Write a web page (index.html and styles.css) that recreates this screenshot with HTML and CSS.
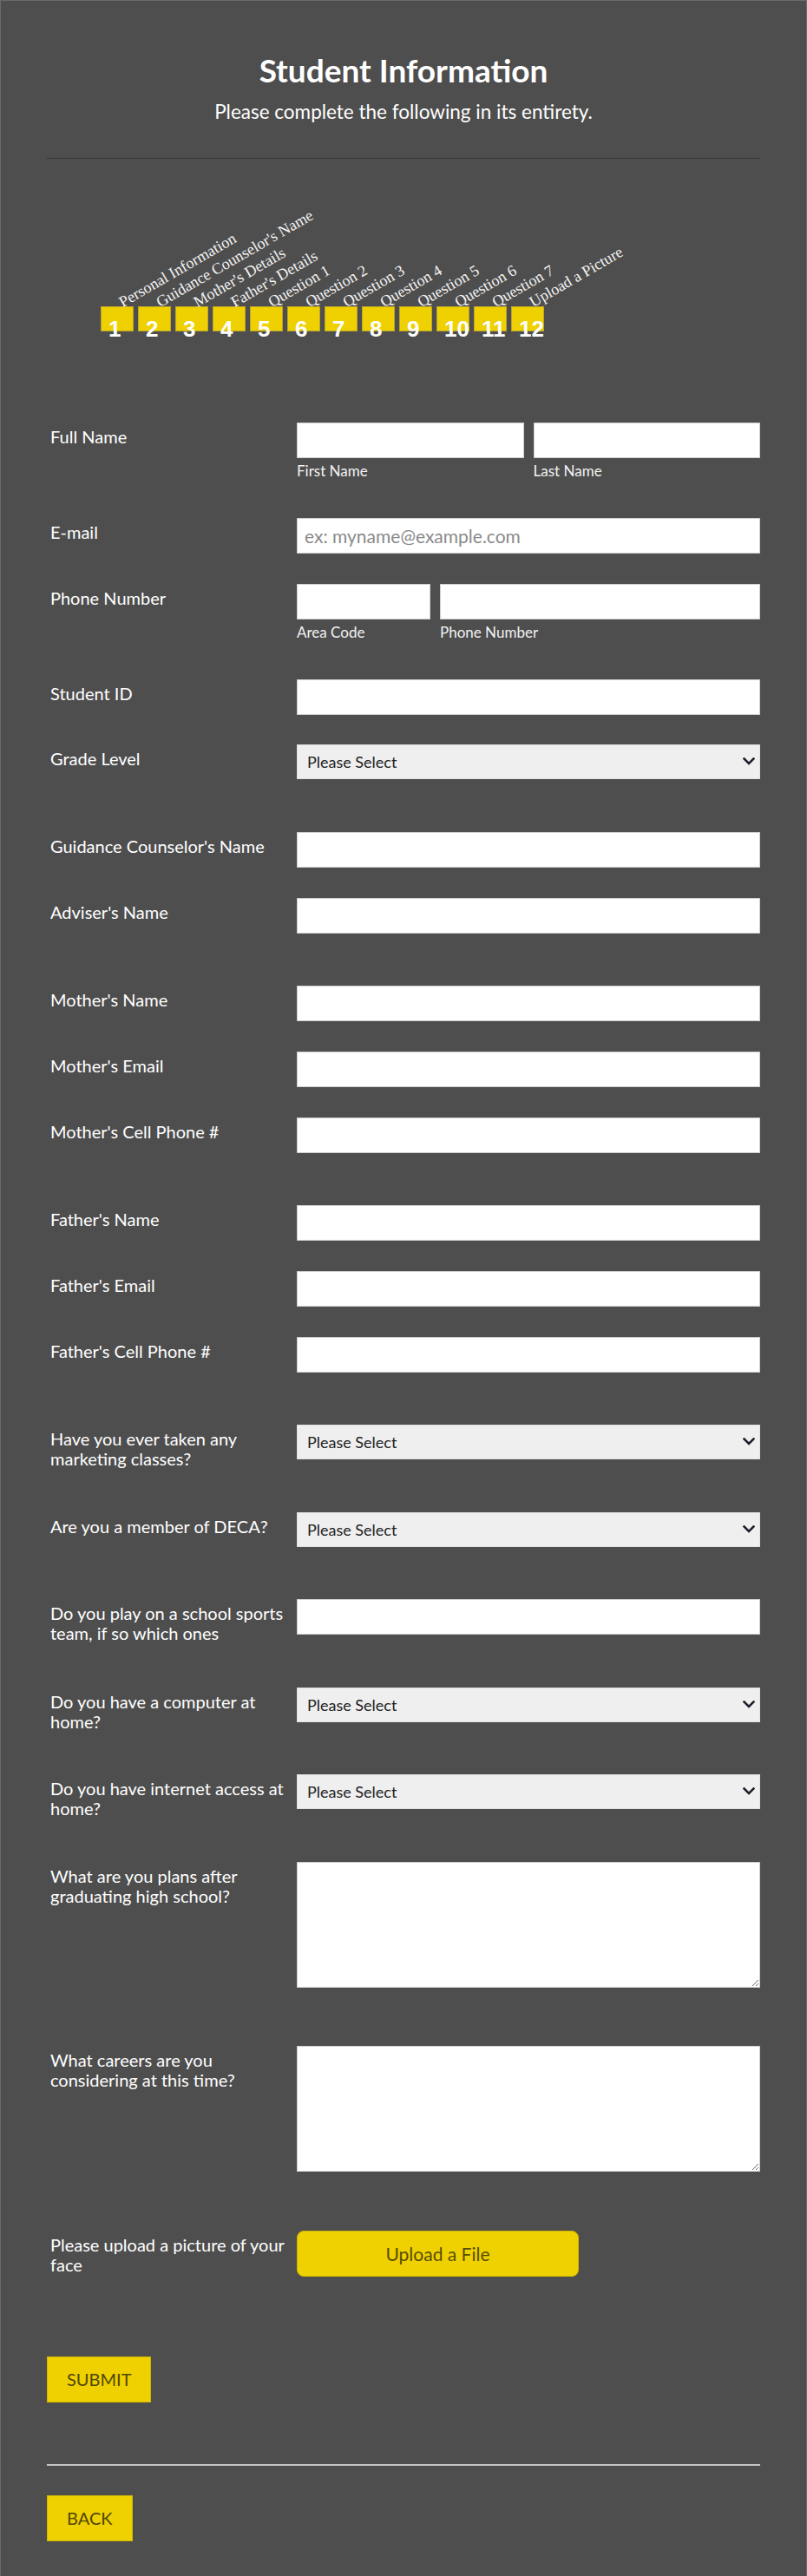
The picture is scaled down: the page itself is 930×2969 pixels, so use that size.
FILE: index.html
```html
<!DOCTYPE html>
<html>
<head>
<link rel="stylesheet" href="styles.css">
</head>
<body>
<div class="page">

  <div class="header">
    <h1 class="title">Student Information</h1>
    <p class="subtitle">Please complete the following in its entirety.</p>
  </div>
  <div class="header-line"></div>

  <ul class="steps">
    <li class="step"><span class="step-name">Personal Information</span><span class="step-num">1</span></li>
    <li class="step"><span class="step-name">Guidance Counselor's Name</span><span class="step-num">2</span></li>
    <li class="step"><span class="step-name">Mother's Details</span><span class="step-num">3</span></li>
    <li class="step"><span class="step-name">Father's Details</span><span class="step-num">4</span></li>
    <li class="step"><span class="step-name">Question 1</span><span class="step-num">5</span></li>
    <li class="step"><span class="step-name">Question 2</span><span class="step-num">6</span></li>
    <li class="step"><span class="step-name">Question 3</span><span class="step-num">7</span></li>
    <li class="step"><span class="step-name">Question 4</span><span class="step-num">8</span></li>
    <li class="step"><span class="step-name">Question 5</span><span class="step-num">9</span></li>
    <li class="step"><span class="step-name">Question 6</span><span class="step-num">10</span></li>
    <li class="step"><span class="step-name">Question 7</span><span class="step-num">11</span></li>
    <li class="step"><span class="step-name">Upload a Picture</span><span class="step-num">12</span></li>
  </ul>

  <form class="form">
    <div class="group">
      <div class="field has-sub">
        <label class="field-label">Full Name</label>
        <div class="control">
          <div class="split">
            <div><input type="text"><span class="sublabel">First Name</span></div>
            <div><input type="text"><span class="sublabel">Last Name</span></div>
          </div>
        </div>
      </div>
      <div class="field">
        <label class="field-label">E-mail</label>
        <div class="control"><input type="email" placeholder="ex: myname@example.com"></div>
      </div>
      <div class="field has-sub">
        <label class="field-label">Phone Number</label>
        <div class="control">
          <div class="split phone">
            <div><input type="text"><span class="sublabel">Area Code</span></div>
            <div><input type="text"><span class="sublabel">Phone Number</span></div>
          </div>
        </div>
      </div>
      <div class="field">
        <label class="field-label">Student ID</label>
        <div class="control"><input type="text"></div>
      </div>
      <div class="field">
        <label class="field-label">Grade Level</label>
        <div class="control select-wrap">
          <select><option>Please Select</option><option>9</option><option>10</option><option>11</option><option>12</option></select>
          <svg class="chevron" width="14" height="9" viewBox="0 0 14 9"><path d="M1.5 1.5 L7 7 L12.5 1.5" /></svg>
        </div>
      </div>
    </div>

    <div class="group">
      <div class="field">
        <label class="field-label">Guidance Counselor's Name</label>
        <div class="control"><input type="text"></div>
      </div>
      <div class="field">
        <label class="field-label">Adviser's Name</label>
        <div class="control"><input type="text"></div>
      </div>
    </div>

    <div class="group">
      <div class="field">
        <label class="field-label">Mother's Name</label>
        <div class="control"><input type="text"></div>
      </div>
      <div class="field">
        <label class="field-label">Mother's Email</label>
        <div class="control"><input type="email"></div>
      </div>
      <div class="field">
        <label class="field-label">Mother's Cell Phone #</label>
        <div class="control"><input type="tel"></div>
      </div>
    </div>

    <div class="group">
      <div class="field">
        <label class="field-label">Father's Name</label>
        <div class="control"><input type="text"></div>
      </div>
      <div class="field">
        <label class="field-label">Father's Email</label>
        <div class="control"><input type="email"></div>
      </div>
      <div class="field">
        <label class="field-label">Father's Cell Phone #</label>
        <div class="control"><input type="tel"></div>
      </div>
    </div>

    <div class="group">
      <div class="field">
        <label class="field-label">Have you ever taken any marketing classes?</label>
        <div class="control select-wrap">
          <select><option>Please Select</option><option>Yes</option><option>No</option></select>
          <svg class="chevron" width="14" height="9" viewBox="0 0 14 9"><path d="M1.5 1.5 L7 7 L12.5 1.5" /></svg>
        </div>
      </div>
    </div>

    <div class="group">
      <div class="field">
        <label class="field-label">Are you a member of DECA?</label>
        <div class="control select-wrap">
          <select><option>Please Select</option><option>Yes</option><option>No</option></select>
          <svg class="chevron" width="14" height="9" viewBox="0 0 14 9"><path d="M1.5 1.5 L7 7 L12.5 1.5" /></svg>
        </div>
      </div>
    </div>

    <div class="group">
      <div class="field">
        <label class="field-label">Do you play on a school sports team, if so which ones</label>
        <div class="control"><input type="text"></div>
      </div>
    </div>

    <div class="group">
      <div class="field">
        <label class="field-label">Do you have a computer at home?</label>
        <div class="control select-wrap">
          <select><option>Please Select</option><option>Yes</option><option>No</option></select>
          <svg class="chevron" width="14" height="9" viewBox="0 0 14 9"><path d="M1.5 1.5 L7 7 L12.5 1.5" /></svg>
        </div>
      </div>
    </div>

    <div class="group">
      <div class="field">
        <label class="field-label">Do you have internet access at home?</label>
        <div class="control select-wrap">
          <select><option>Please Select</option><option>Yes</option><option>No</option></select>
          <svg class="chevron" width="14" height="9" viewBox="0 0 14 9"><path d="M1.5 1.5 L7 7 L12.5 1.5" /></svg>
        </div>
      </div>
    </div>

    <div class="group">
      <div class="field">
        <label class="field-label">What are you plans after graduating high school?</label>
        <div class="control"><textarea></textarea></div>
      </div>
    </div>

    <div class="group">
      <div class="field">
        <label class="field-label">What careers are you considering at this time?</label>
        <div class="control"><textarea></textarea></div>
      </div>
    </div>

    <div class="group">
      <div class="field">
        <label class="field-label">Please upload a picture of your face</label>
        <div class="control"><button type="button" class="upload">Upload a File</button></div>
      </div>
    </div>

    <div class="actions">
      <button type="submit" class="btn">SUBMIT</button>
    </div>
  </form>

  <div class="footer-line"></div>
  <button type="button" class="btn back">BACK</button>

</div>
</body>
</html>
```

FILE: styles.css
```css
html, body {
  margin: 0;
  background-color: #4e4e4e;
}

body {
  font-family: Lato, "Noto Sans", sans-serif;
  color: #ffffff;
}

.page {
  min-height: 2969px;
  box-sizing: border-box;
  border: 1px solid #6a6a6a;
  padding: 0 53px 40px 53px;
}

/* heading */
.header {
  text-align: center;
  padding-top: 59px;
}

.title {
  margin: 0;
  font-size: 37px;
  line-height: 42px;
  font-weight: 700;
}

.subtitle {
  margin: 14px 0 0;
  font-size: 22.5px;
  line-height: 26px;
}

.header-line {
  margin-top: 40px;
  border-top: 1px solid #333333;
}

/* page steps */
.steps {
  list-style: none;
  display: flex;
  margin: 156px 0 0;
  padding: 0 0 0 62px;
}

.step {
  width: 38px;
  margin-right: 5px;
}

.step-name {
  display: block;
  margin: 0 0 -4px 27px;
  white-space: nowrap;
  font-family: "Liberation Serif", serif;
  font-size: 18px;
  line-height: 18px;
  color: #f4f4f4;
  transform-origin: 0 100%;
  transform: rotate(-30deg);
}

.step-num {
  display: block;
  height: 29px;
  box-sizing: border-box;
  padding: 10px 0 0 8px;
  background-color: #efd000;
  border: 1px solid #bca52a;
  font-family: "Liberation Sans", Arial, sans-serif;
  font-weight: 700;
  font-size: 26px;
  line-height: 30px;
  color: #ffffff;
  white-space: nowrap;
}

/* form rows */
.form {
  display: flow-root;
  margin-top: 70.5px;
}

.group {
  display: flow-root;
}

.group + .group {
  margin-top: 25.75px;
}

.field {
  display: flex;
  align-items: flex-start;
  margin-top: 34.75px;
}

.field.has-sub {
  padding-bottom: 10px;
}

.field-label {
  width: 288px;
  flex: none;
  box-sizing: border-box;
  padding: 5px 10px 0 4px;
  margin-bottom: -14px;
  font-size: 20px;
  line-height: 23px;
}

.control {
  flex: 1;
}

.split {
  display: grid;
  grid-template-columns: 1fr 1fr;
  column-gap: 11px;
}

.split.phone {
  grid-template-columns: 154px 1fr;
}

.sublabel {
  display: block;
  margin-top: 5px;
  font-size: 17px;
  line-height: 19px;
  color: #f2f2f2;
}

input {
  display: block;
  width: 100%;
  height: 41px;
  box-sizing: border-box;
  padding: 0 8px;
  border: 1px solid #cfcfcf;
  background-color: #ffffff;
  font-family: Lato, sans-serif;
  font-size: 21px;
  color: #222222;
}

input::placeholder {
  color: #8a8a8a;
}

/* dropdowns draw their own chevron on top */
.select-wrap {
  position: relative;
}

select {
  display: block;
  width: 100%;
  height: 40px;
  box-sizing: border-box;
  padding: 0 30px 0 11px;
  border: 1px solid #e2e2e2;
  border-radius: 0;
  background-color: #efefef;
  appearance: none;
  -webkit-appearance: none;
  font-family: Lato, sans-serif;
  font-size: 18px;
  color: #222222;
}

.chevron {
  position: absolute;
  right: 6px;
  top: 15px;
  pointer-events: none;
}

.chevron path {
  fill: none;
  stroke: #1f1f2b;
  stroke-width: 2.6;
  stroke-linecap: square;
}

textarea {
  display: block;
  width: 100%;
  height: 145px;
  box-sizing: border-box;
  margin-bottom: 7px;
  border: 1px solid #cfcfcf;
  background-color: #ffffff;
}

.upload {
  display: block;
  width: 325px;
  height: 53px;
  border: 1px solid #d2b800;
  border-radius: 8px;
  background-color: #efd000;
  font-family: Lato, sans-serif;
  font-size: 21px;
  color: #574e00;
  cursor: pointer;
}

/* buttons */
.actions {
  margin-top: 92px;
}

.btn {
  display: block;
  height: 53px;
  padding: 0 22px;
  border: 1px solid #d2b800;
  border-radius: 0;
  background-color: #efd000;
  font-family: Lato, sans-serif;
  font-size: 20px;
  color: #4f4700;
  cursor: pointer;
}

.footer-line {
  margin-top: 71px;
  border-top: 2px solid #c4c4c4;
}

.back {
  margin-top: 34px;
}
```
